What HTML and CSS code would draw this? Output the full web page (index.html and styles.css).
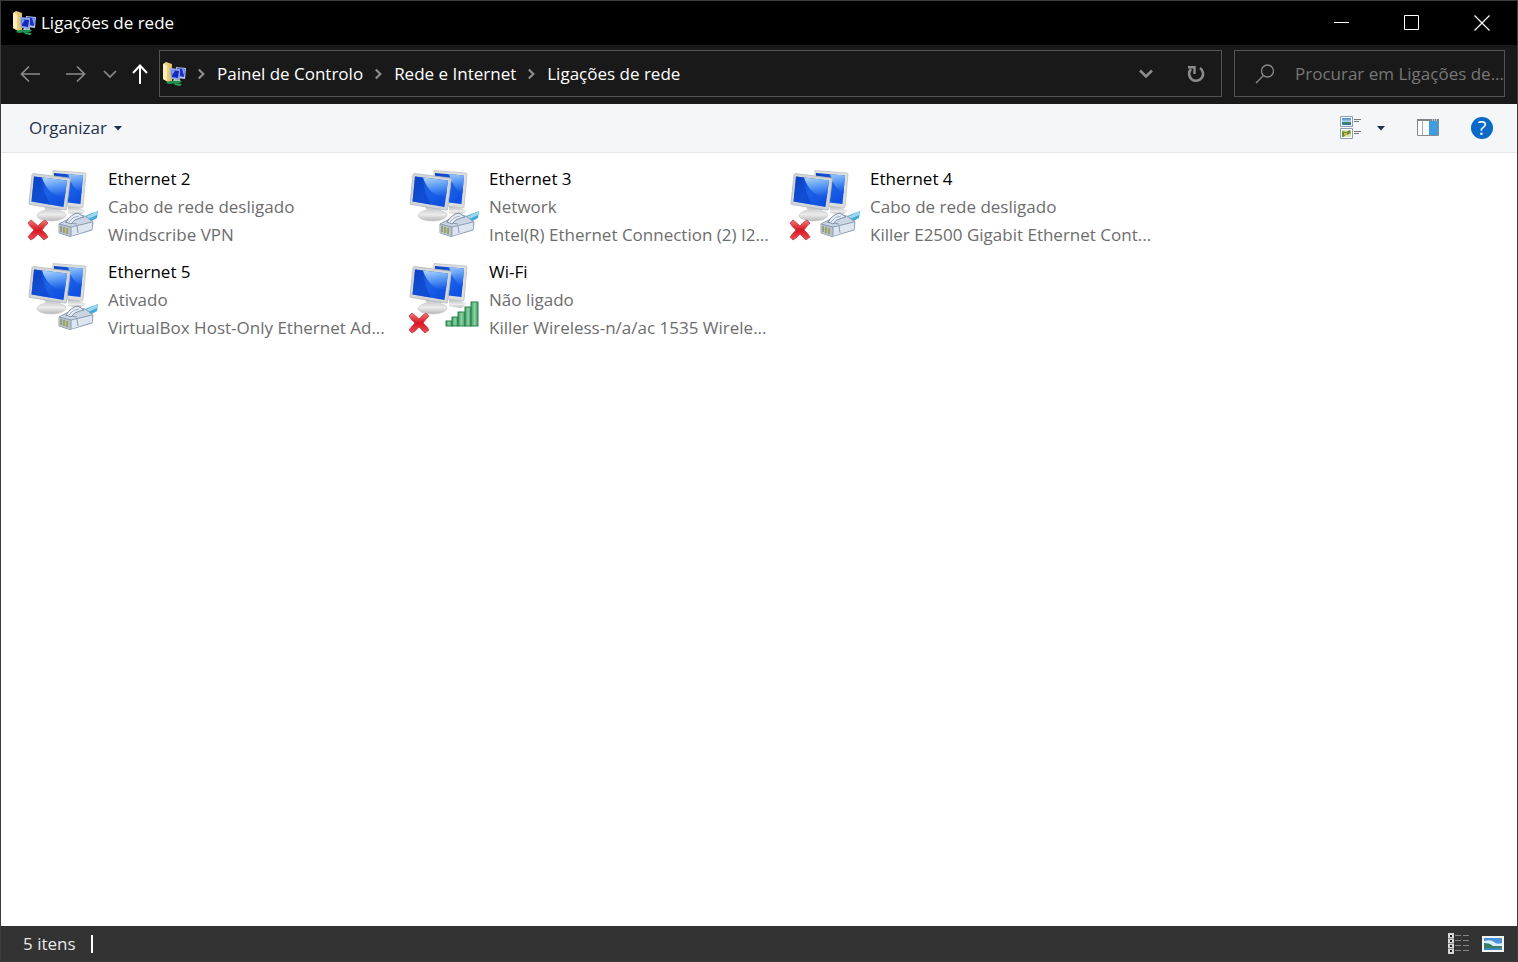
FILE: index.html
```html
<!DOCTYPE html>
<html lang="pt">
<head>
<meta charset="utf-8">
<title>Ligações de rede</title>
<link rel="stylesheet" href="styles.css">
</head>
<body>
<svg class="sprite" aria-hidden="true">
  <defs>
    <linearGradient id="screen" x1="0" y1="0" x2=".9" y2="1">
      <stop offset="0" stop-color="#0a3fc0"/><stop offset=".5" stop-color="#1c62e8"/><stop offset="1" stop-color="#0a4ce0"/>
    </linearGradient>
    <linearGradient id="shine" x1=".3" y1="0" x2=".5" y2="1">
      <stop offset="0" stop-color="#a9cffc"/><stop offset=".5" stop-color="#5597f5"/><stop offset="1" stop-color="#1558e4"/>
    </linearGradient>
    <linearGradient id="base" x1="0" y1="0" x2="0" y2="1">
      <stop offset="0" stop-color="#b4b6b9"/><stop offset=".6" stop-color="#ececec"/><stop offset="1" stop-color="#b5b6b8"/>
    </linearGradient>
    <linearGradient id="red" x1="0" y1="0" x2="0" y2="1">
      <stop offset="0" stop-color="#f0787a"/><stop offset=".5" stop-color="#d8161f"/><stop offset="1" stop-color="#e8505a"/>
    </linearGradient>
    <linearGradient id="green" x1="0" y1="0" x2="1" y2="0">
      <stop offset="0" stop-color="#3c9c62"/><stop offset=".5" stop-color="#8fd0a3"/><stop offset="1" stop-color="#3f9f65"/>
    </linearGradient>
    <linearGradient id="folder" x1="0" y1="0" x2="1" y2="0">
      <stop offset="0" stop-color="#f8e6a0"/><stop offset="1" stop-color="#dcb860"/>
    </linearGradient>
    <linearGradient id="sky" x1="0" y1="0" x2="0" y2="1">
      <stop offset="0" stop-color="#3f83cf"/><stop offset=".6" stop-color="#c9e6f5"/><stop offset=".62" stop-color="#42805f"/><stop offset="1" stop-color="#2675ac"/>
    </linearGradient>
  </defs>
  <symbol id="computers" viewBox="0 0 72 74">
    <path d="M40 37l9 1 9 4-6 4-12-2z" fill="url(#base)"/>
    <path d="M25 1.500L57 4q1 0 1 1l-3 33q0 1-2 1l-29-4z" fill="#dcdddd" stroke="#bfc1c2" stroke-width=".8"/>
    <path d="M26 4l29 2.500L52.500 35 26 32z" fill="url(#screen)"/>
    <path d="M30 4.300l25 2.200-1.500 18Q44 20 40 5z" fill="url(#shine)"/>
    <path d="M16 36l16 3v3q6 1 6 4-1 5-13 6-14 0-16-5 0-4 9-6z" fill="url(#base)" stroke="#c8c9ca" stroke-width=".7"/>
    <path d="M5 4.500L41 9q1.500 0 1.300 1.500L38.500 40q0 1.500-2 1L2 35.500q-1.500 0-1-1.500L4 5.500z" fill="#d3d6d8" stroke="#b4b8bb" stroke-width=".8"/>
    <path d="M6 7.500L39 11.500 35.500 38 3.500 32.500z" fill="url(#screen)"/>
    <path d="M14 8.500l25 3-2.200 17Q20 27 14 8.500z" fill="url(#shine)"/>
    <path d="M6 7.500l7 .8q2 15 9 27.300L3.500 32.500z" fill="#0c43c8" opacity=".65"/>
  </symbol>
  <symbol id="plug" viewBox="0 0 42 28">
    <path d="M24 8q8-4 17-7l-1 7-9 5z" fill="#3fa9d8"/>
    <path d="M26 8L41 1l-1 4-13 6z" fill="#9cd8f0"/>
    <path d="M2 14L19 5l9 1 8 6-1 8-22 6.500L2 23z" fill="#cbd6e4" stroke="#8294aa" stroke-width=".9"/>
    <path d="M2 14l12 3v9L2 23z" fill="#b7c2c8"/>
    <path d="M14 17l21-5v7l-21 7z" fill="#dde5f0"/>
    <path d="M2 14l12 3 21-5M14 17v9M20 16l1 7M8 12l12 2" fill="none" stroke="#8294aa" stroke-width=".9"/>
    <path d="M9 12Q14 4 21 3l6 4-4 1q-6 1-9 6z" fill="#e6ecf5" stroke="#76879f" stroke-width=".9"/>
    <path d="M12 12q4-6 10-6" fill="none" stroke="#9badc2"/>
    <path d="M4 16v6M7 17v6M10 18v6" stroke="#8b9265" stroke-width="1.500"/>
    <path d="M8.500 18v5" stroke="#b6c763" stroke-width="1.500"/>
  </symbol>
  <symbol id="cross" viewBox="0 0 22 22">
    <path d="M4 1Q8 4 11 7q3-4 7-6l3 3q-3 3-6 7 4 3 6 7l-4 3q-3-3-6-6-3 4-7 6l-3-3q3-4 6-7-4-3-6-7z" fill="url(#red)" stroke="#c93a42" stroke-width=".8"/>
  </symbol>
  <symbol id="signal" viewBox="0 0 34 28">
    <g fill="url(#green)" stroke="#28824c">
      <rect x="1" y="21" width="6" height="5"/><rect x="7" y="17" width="6" height="9"/><rect x="13" y="12" width="7" height="14"/><rect x="20" y="7" width="6" height="19"/><rect x="26" y="2" width="7" height="24"/>
    </g>
  </symbol>
  <symbol id="netfolder" viewBox="0 0 24 24">
    <path d="M1 2l3-2 6 2v17l-4 1-5-3z" fill="url(#folder)"/>
    <path d="M1 2l4 2v15l-4-2z" fill="#fbedb8"/>
    <path d="M14 5l10 1-1 11-8-1z" fill="#b9c6ea"/><path d="M15 6l8 1-1 8-6-1z" fill="#1c30c8"/><path d="M20 7l3 .5-1 6z" fill="#7fa4f4"/>
    <path d="M8 6l10 1v11l-9-1z" fill="#8ea5e8"/><path d="M9 8l8 1-1 7-6-1z" fill="#1528b8"/><path d="M9 8l4 .5-3 5z" fill="#7ba2ff"/>
    <path d="M12 17l6 1 1 2-8-1z" fill="#ccd2da"/>
    <path d="M4 20q8-2 16-1l-2 2-12 1z" fill="#1c9450"/><path d="M12 21l8 1-2 2-5-1z" fill="#25a65b"/>
  </symbol>
  <symbol id="crumb" viewBox="0 0 10 12"><path d="M2 1l5 5-5 5" fill="none" stroke="#8c8c8c" stroke-width="2.500"/></symbol>
</svg>

<div class="window">
  <header class="titlebar">
    <svg class="app-icon"><use href="#netfolder"/></svg>
    <h1 class="title">Ligações de rede</h1>
    <div class="caption">
      <button class="caption-btn" aria-label="Minimizar"><svg width="16" height="16"><path d="M0 7.500h15" stroke="#fff"/></svg></button>
      <button class="caption-btn" aria-label="Maximizar"><svg width="16" height="16"><path d="M.5.5h14v14H.5z" fill="none" stroke="#fff"/></svg></button>
      <button class="caption-btn" aria-label="Fechar"><svg width="16" height="16"><path d="M.5.5l15 15M15.500.5l-15 15" stroke="#fff" stroke-width="1.200"/></svg></button>
    </div>
  </header>

  <nav class="navbar">
    <div class="history">
      <button class="icon-btn" aria-label="Retroceder"><svg width="20" height="18"><path d="M20 9H1M9 1.500L1.500 9 9 16.500" fill="none" stroke="#8a8a8a" stroke-width="1.700"/></svg></button>
      <button class="icon-btn forward" aria-label="Avançar"><svg width="20" height="18"><path d="M0 9h19M11 1.500L18.500 9 11 16.500" fill="none" stroke="#8a8a8a" stroke-width="1.700"/></svg></button>
      <button class="icon-btn recent" aria-label="Localizações recentes"><svg width="14" height="10"><path d="M1 2l6 6 6-6" fill="none" stroke="#8a8a8a" stroke-width="1.700"/></svg></button>
      <button class="icon-btn up" aria-label="Subir"><svg width="16" height="20"><path d="M8 20V2M1 9l7-7.500L15 9" fill="none" stroke="#fff" stroke-width="2"/></svg></button>
    </div>
    <div class="address">
      <svg class="app-icon"><use href="#netfolder"/></svg>
      <svg class="crumb"><use href="#crumb"/></svg>
      <a class="crumb-link" href="#painel">Painel de Controlo</a>
      <svg class="crumb"><use href="#crumb"/></svg>
      <a class="crumb-link" href="#rede">Rede e Internet</a>
      <svg class="crumb"><use href="#crumb"/></svg>
      <a class="crumb-link" href="#ligacoes">Ligações de rede</a>
      <div class="address-actions">
        <button class="icon-btn address-btn" aria-label="Localizações anteriores"><svg width="14" height="10"><path d="M1 1.500l6 6 6-6" fill="none" stroke="#8c8c8c" stroke-width="2.600"/></svg></button>
        <button class="icon-btn address-btn" aria-label="Atualizar"><svg width="18" height="18"><path d="M13 3A7 7 0 1 1 4 4" fill="none" stroke="#8c8c8c" stroke-width="2.600"/><path d="M1 2.200h6.500V9" fill="none" stroke="#8c8c8c" stroke-width="2.400"/></svg></button>
      </div>
    </div>
    <label class="search">
      <svg width="20" height="20"><circle cx="12.500" cy="7" r="6" fill="none" stroke="#8a8a8a" stroke-width="1.300"/><path d="M8.500 11.500L1 19" stroke="#8a8a8a" stroke-width="1.300"/></svg>
      <input class="search-input" type="text" aria-label="Procurar" placeholder="Procurar em Ligações de...">
    </label>
  </nav>

  <div class="toolbar">
    <button class="organize">Organizar <svg width="8" height="5"><path d="M0 0h8L4 4.500z" fill="#1e3250"/></svg></button>
    <div class="tools">
      <button class="icon-btn tool-view" aria-label="Alterar a vista">
        <svg width="22" height="24">
          <path d="M.5.5h12v10H.5zM.5 12.500h12v10H.5z" fill="#fff" stroke="#8e9db0"/>
          <path d="M2 2h9v7H2z" fill="url(#sky)"/><path d="M2 14h9v7H2z" fill="#d7e4b4"/>
          <path d="M2 15l4 1v3l-3 2H2zM6 16l4-2 1 3-4 2z" fill="#6b8b35"/><path d="M4 17h3v2H4z" fill="#dbb440"/>
          <path d="M14 3.500h7M14 5.500h5M14 15.500h7M14 17.500h5" stroke="#777"/>
        </svg>
      </button>
      <button class="icon-btn tool-drop" aria-label="Mais opções"><svg width="8" height="5"><path d="M0 0h8L4 4.500z" fill="#1e3250"/></svg></button>
      <button class="icon-btn tool-pane" aria-label="Painel de pré-visualização">
        <svg width="22" height="18"><path d="M.5.500h21v16H.5z" fill="#fff" stroke="#868b91"/><path d="M0 0h22v2H0z" fill="#7d838a"/><path d="M5.500 2v14" stroke="#a7abb0"/><path d="M12 2h9v14h-9z" fill="#409ce0"/><path d="M15 1h1M17 1h1M19 1h1" stroke="#fff"/></svg>
      </button>
      <button class="help" aria-label="Ajuda">?</button>
    </div>
  </div>

  <main class="content">
    <ul class="connections">
      <li class="connection">
        <div class="picture"><svg class="pc"><use href="#computers"/></svg><svg class="cross"><use href="#cross"/></svg><svg class="plug"><use href="#plug"/></svg></div>
        <div class="info"><div class="name">Ethernet 2</div><div>Cabo de rede desligado</div><div>Windscribe VPN</div></div>
      </li>
      <li class="connection">
        <div class="picture"><svg class="pc"><use href="#computers"/></svg><svg class="plug"><use href="#plug"/></svg></div>
        <div class="info"><div class="name">Ethernet 3</div><div>Network</div><div>Intel(R) Ethernet Connection (2) I2...</div></div>
      </li>
      <li class="connection">
        <div class="picture"><svg class="pc"><use href="#computers"/></svg><svg class="cross"><use href="#cross"/></svg><svg class="plug"><use href="#plug"/></svg></div>
        <div class="info"><div class="name">Ethernet 4</div><div>Cabo de rede desligado</div><div>Killer E2500 Gigabit Ethernet Cont...</div></div>
      </li>
      <li class="connection">
        <div class="picture"><svg class="pc"><use href="#computers"/></svg><svg class="plug"><use href="#plug"/></svg></div>
        <div class="info"><div class="name">Ethernet 5</div><div>Ativado</div><div>VirtualBox Host-Only Ethernet Ad...</div></div>
      </li>
      <li class="connection">
        <div class="picture"><svg class="pc"><use href="#computers"/></svg><svg class="cross"><use href="#cross"/></svg><svg class="signal"><use href="#signal"/></svg></div>
        <div class="info"><div class="name">Wi-Fi</div><div>Não ligado</div><div>Killer Wireless-n/a/ac 1535 Wirele...</div></div>
      </li>
    </ul>
  </main>

  <footer class="statusbar">
    <span class="count">5 itens</span>
    <div class="views">
      <button class="icon-btn" aria-label="Detalhes">
        <svg width="22" height="21"><path d="M0 0h6v21H0z" fill="#d8d8d8"/><path d="M2 2h2v2H2zM2 7h2v2H2zM2 12h2v2H2zM2 17h2v2H2z" fill="#222"/><path d="M0 5.500h6M0 10.500h6M0 15.500h6" stroke="#888"/><path d="M7 2.500h6M15 2.500h6M7 7.500h6M15 7.500h6M7 12.500h6M15 12.500h6M7 17.500h6M15 17.500h6" stroke="#858585"/></svg>
      </button>
      <button class="icon-btn" aria-label="Ícones grandes">
        <svg width="22" height="16"><path d="M0 0h22v16H0z" fill="#f2f5f8"/><path d="M2 2h18v12H2z" fill="#4d92d6"/><path d="M2 5q7-2 10 1t8 1v3H2z" fill="#d9eff8"/><path d="M2 7q6 0 9 3l9 0v2H2z" fill="#3b7d62"/><path d="M2 12h18v2H2z" fill="#3a86bd"/></svg>
      </button>
    </div>
  </footer>
</div>
</body>
</html>
```
FILE: styles.css
```css
* { box-sizing: border-box; }

body {
  margin: 0;
  font-family: "Open Sans", "Noto Sans", sans-serif;
  font-size: 17px;
  line-height: 28px;
}

button, input { font: inherit; color: inherit; background: none; border: 0; padding: 0; }
svg { display: block; flex: none; }
.sprite { position: absolute; width: 0; height: 0; }

.window {
  display: flex;
  flex-direction: column;
  min-height: 100vh;
  border: 1px solid #3c3c3c;
  background: #fff;
}

.titlebar {
  display: flex;
  align-items: center;
  height: 44px;
  padding-left: 11px;
  gap: 5px;
  background: #000;
  color: #fff;
}
.title { margin: 0; font-size: 17px; font-weight: 400; }
.app-icon { width: 24px; height: 24px; }
.caption { display: flex; margin-left: auto; align-self: stretch; }
.caption-btn { display: grid; place-items: center; width: 70px; }

.navbar {
  display: flex;
  align-items: center;
  gap: 12px;
  height: 59px;
  padding: 0 12px 2px 18px;
  background: #191919;
  color: #fff;
}
.icon-btn { display: grid; place-items: center; }
.history { display: flex; align-items: center; width: 128px; padding-left: 1px; }
.forward { margin-left: 26px; }
.recent { margin-left: 17px; }
.up { margin-left: 15px; }
.address {
  display: flex;
  align-items: center;
  flex: 1;
  gap: 11px;
  height: 47px;
  padding-left: 2px;
  border: 1px solid #535353;
}
.crumb { width: 9px; height: 12px; }
.crumb-link { color: #fff; text-decoration: none; white-space: nowrap; }
.address-actions { display: flex; align-self: stretch; margin-left: auto; }
.address-btn { width: 50px; }
.search {
  display: flex;
  align-items: center;
  gap: 20px;
  width: 271px;
  height: 47px;
  padding-left: 20px;
  border: 1px solid #535353;
}
.search-input { flex: 1; min-width: 0; outline: 0; }
.search-input::placeholder { color: #777; opacity: 1; }

.toolbar {
  display: flex;
  align-items: center;
  justify-content: space-between;
  height: 49px;
  padding: 0 24px 0 28px;
  background: #f5f6f7;
  border-bottom: 1px solid #e4e7ea;
  color: #1e3250;
}
.organize { display: flex; align-items: center; gap: 7px; }
.tools { display: flex; align-items: center; }
.tool-drop { margin-left: 15px; }
.tool-pane { margin-left: 32px; }
.help {
  width: 22px;
  height: 22px;
  margin-left: 32px;
  border-radius: 50%;
  background: #0869c6;
  color: #fff;
  font-size: 20px;
  line-height: 22px;
}

.content { flex: 1; padding: 12px 26px; }
.connections {
  display: grid;
  grid-template-columns: repeat(auto-fill, 381px);
  row-gap: 9px;
  margin: 0;
  padding: 0;
  list-style: none;
}
.connection { display: flex; gap: 8px; }
.picture { position: relative; width: 73px; height: 78px; }
.pc { width: 72px; height: 74px; margin: 4px 0 0 1px; }
.cross { position: absolute; left: 0; bottom: 2px; width: 22px; height: 22px; }
.plug { position: absolute; left: 30px; bottom: 5px; width: 42px; height: 28px; }
.signal { position: absolute; left: 37px; bottom: 8px; width: 34px; height: 28px; }
.info { color: #6d6d6d; white-space: nowrap; }
.name { color: #000; }

.statusbar {
  display: flex;
  align-items: center;
  justify-content: space-between;
  height: 35px;
  padding: 0 13px 0 22px;
  background: #333;
  color: #e8e8e8;
}
.count { padding-right: 15px; border-right: 2px solid #fff; line-height: 18px; }
.views { display: flex; align-items: center; gap: 12px; }
```
